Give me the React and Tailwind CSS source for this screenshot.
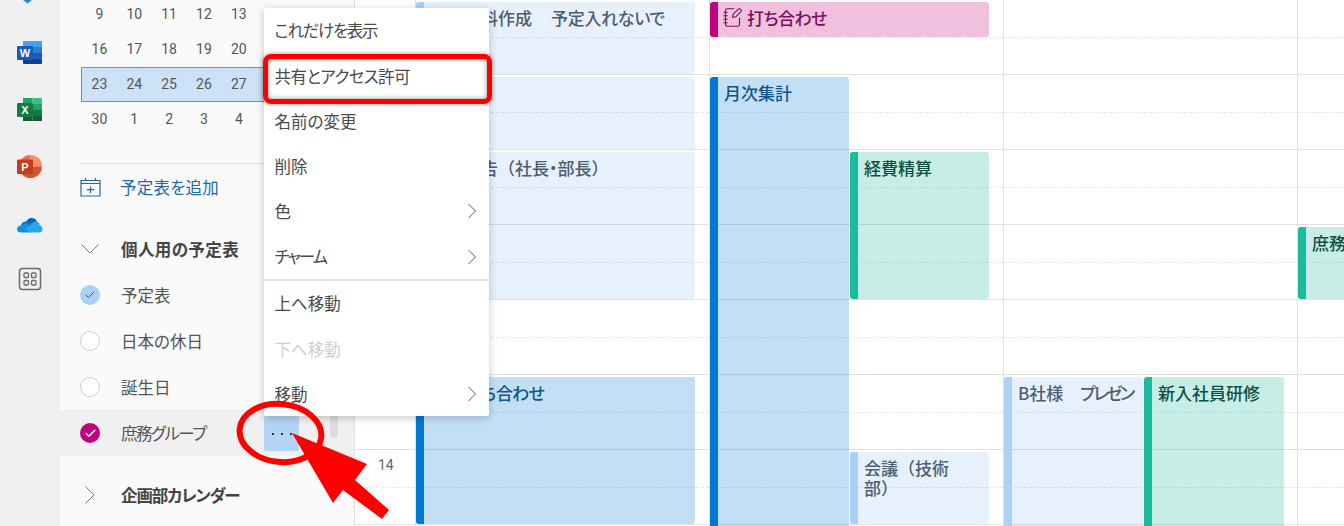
import { Check, NotebookPen } from 'lucide-react';

const hours = [0, 1, 2, 3, 4, 5, 6];

const weeks = [
  [9, 10, 11, 12, 13, '', ''],
  [16, 17, 18, 19, 20, '', ''],
  [23, 24, 25, 26, 27, '', ''],
  [30, 1, 2, 3, 4, '', ''],
];

function MenuChevron() {
  return (
    <svg width="10" height="16" viewBox="0 0 10 16" className="ml-auto mr-[12px]">
      <path d="M1.5 1 L8.5 8 L1.5 15" fill="none" stroke="#5a5a5a" strokeWidth="1" />
    </svg>
  );
}

function MenuItem({ children, arrow, disabled, className = '' }) {
  return (
    <div className={`flex h-[45.2px] items-center pl-[10.5px] ${disabled ? 'text-[#cfcfcf]' : 'text-[#4a4a4a]'} ${className}`}>
      {children}
      {arrow && <MenuChevron />}
    </div>
  );
}

function RailIcons() {
  return (
    <div className="flex h-full w-[60px] shrink-0 flex-col items-center bg-[#f0f0f0]">
      {/* tip of the icon above, cut off by the window */}
      <svg width="60" height="4" className="shrink-0">
        <path d="M23 0 H32 L27.500 3.500 Z" fill="#2b88d8" />
      </svg>
      {/* Word */}
      <svg width="26" height="24" viewBox="0 0 26 24" className="ml-[-1px] mt-[37px] shrink-0">
        <rect x="6" y="0" width="19" height="6" fill="#41a5ee" />
        <rect x="6" y="6" width="19" height="6" fill="#2b7cd3" />
        <rect x="6" y="12" width="19" height="6" fill="#185abd" />
        <rect x="6" y="18" width="19" height="5" rx="1" fill="#103f91" />
        <rect x="0" y="5" width="16" height="14" rx="1" fill="#185abd" />
        <text x="8" y="16" textAnchor="middle" fontSize="11" fontWeight="700" fill="#fff" fontFamily="'Liberation Sans', sans-serif">W</text>
      </svg>
      {/* Excel */}
      <svg width="26" height="24" viewBox="0 0 26 24" className="ml-[-1px] mt-[33px] shrink-0">
        <rect x="6" y="0" width="9.500" height="6" fill="#21a366" />
        <rect x="15.500" y="0" width="9.500" height="6" fill="#33c481" />
        <rect x="6" y="6" width="9.500" height="6" fill="#107c41" />
        <rect x="15.500" y="6" width="9.500" height="6" fill="#21a366" />
        <rect x="6" y="12" width="9.500" height="11" fill="#185c37" />
        <rect x="15.500" y="12" width="9.500" height="6" fill="#107c41" />
        <rect x="15.500" y="18" width="9.500" height="5" fill="#185c37" />
        <rect x="0" y="5" width="16" height="14" rx="1" fill="#107c41" />
        <text x="8" y="16" textAnchor="middle" fontSize="11" fontWeight="700" fill="#fff" fontFamily="'Liberation Sans', sans-serif">X</text>
      </svg>
      {/* PowerPoint */}
      <svg width="26" height="24" viewBox="0 0 26 24" className="ml-[-1px] mt-[33px] shrink-0">
        <path d="M13.500 0 A11.500 11.500 0 0 0 2 11.500 H13.500 Z" fill="#ed6c47" />
        <path d="M13.500 0 A11.500 11.500 0 0 1 25 11.500 H13.500 Z" fill="#ff8f6b" />
        <path d="M2 11.500 A11.500 11.500 0 0 0 25 11.500 Z" fill="#d35230" />
        <rect x="0" y="4.500" width="16" height="14.500" rx="1" fill="#c43e1c" />
        <text x="8" y="16" textAnchor="middle" fontSize="11" fontWeight="700" fill="#fff" fontFamily="'Liberation Sans', sans-serif">P</text>
      </svg>
      {/* OneDrive */}
      <svg width="26" height="17" viewBox="0 0 26 17" className="ml-[-1px] mt-[37px] shrink-0">
        <path d="M9 6 C10.500 1.500 17 0 20 5 L15 10 L8 7 Z" fill="#0364b8" />
        <path d="M9 5.500 C6 5.500 4 7.500 4 10 L10 13 L16 8 Z" fill="#0078d4" />
        <path d="M4.500 9 C1.500 9.500 0 11.500 0 13 C0 15.500 2 16.500 3.500 16.500 H14 L17 11 L9 7.500 Z" fill="#1490df" />
        <path d="M19.500 5.500 C16.500 5.500 14.500 7 13.500 9 L9 13 L13 16.500 H22.500 C24.500 16.500 25.500 15 25.500 13 C25.500 11 24 9.500 22.500 9 C22.500 7 21 5.500 19.500 5.500 Z" fill="#28a8ea" />
      </svg>
      {/* Apps */}
      <svg width="24" height="24" viewBox="0 0 24 24" className="mt-[34px] shrink-0" fill="none" stroke="#6a6a6a">
        <rect x="1.500" y="1.500" width="21" height="21" rx="3" strokeWidth="1.500" />
        <rect x="6" y="6" width="4.500" height="4.500" rx="1" strokeWidth="1.300" />
        <rect x="13.500" y="6" width="4.500" height="4.500" rx="1" strokeWidth="1.300" />
        <rect x="6" y="13.500" width="4.500" height="4.500" rx="1" strokeWidth="1.300" />
        <rect x="13.500" y="13.500" width="4.500" height="4.500" rx="1" strokeWidth="1.300" />
      </svg>
    </div>
  );
}

function CalendarRow({ label, circle, active, labelClass = '' }) {
  return (
    <div className={`flex h-[46px] items-center pl-[20px] ${active ? 'bg-[#f0f0f0]' : ''}`}>
      {circle === 'blue' && (
        <span className="flex h-[20px] w-[20px] items-center justify-center rounded-full bg-[#a9d2f6]">
          <Check size={12} strokeWidth={1.8} className="text-[#2f4a66]" />
        </span>
      )}
      {circle === 'empty' && <span className="h-[20px] w-[20px] rounded-full border border-[#cdcdcd] bg-white" />}
      {circle === 'pink' && (
        <span className="flex h-[20px] w-[20px] items-center justify-center rounded-full bg-[#c2047c]">
          <Check size={13} strokeWidth={2.6} className="text-white" />
        </span>
      )}
      <span className={`ml-[21px] flex-1 text-[#555] ${labelClass}`}>{label}</span>
      {active && (
        <span className="mr-[55px] mt-[1px] flex h-[35px] w-[35px] items-center justify-center gap-[7px] rounded-[2px] bg-[#b3d4f6]">
          <i className="h-[2px] w-[2px] bg-[#333]" />
          <i className="h-[2px] w-[2px] bg-[#333]" />
          <i className="h-[2px] w-[2px] bg-[#333]" />
        </span>
      )}
    </div>
  );
}

function Sidebar() {
  return (
    <div className="relative h-full w-[294px] shrink-0 bg-[#fafafa] text-[#555]">
      {/* mini month */}
      <div className="ml-[21px] mt-[-3px] w-[245px] font-['Roboto',sans-serif] text-[14px] text-[#555]">
        {weeks.map((week, i) => (
          <div
            key={i}
            className={`grid h-[35px] grid-cols-7 items-center pl-[1px] text-center ${i === 2 ? 'bg-[#cde1f7] shadow-[inset_0_0_0_1px_#7e8d9c]' : ''}`}
          >
            {week.map((d, j) => (
              <span key={j}>{d}</span>
            ))}
          </div>
        ))}
      </div>
      <div className="ml-[21px] mr-[20px] mt-[26px] border-t border-[#e1e1e1]" />
      <div className="flex h-[46px] items-center pl-[20px] text-[#1f6aa5]">
        <svg width="21" height="20" viewBox="0 0 21 20" fill="none" stroke="#1f6aa5" strokeWidth="1.200">
          <path d="M1 3.500 H20 V19 H1 Z M1 6.500 H20 M5.500 1 V3.500 M15.500 1 V3.500 M10.500 9.500 V16 M7 12.700 H14" />
        </svg>
        <span className="ml-[19px] tracking-[0.2px]">予定表を追加</span>
      </div>
      <div className="mt-[17px] flex h-[45px] items-center pl-[21px]">
        <svg width="18" height="10" viewBox="0 0 18 10" className="mt-[-1px]">
          <path d="M0.500 0.500 L9 9 L17.500 0.500" fill="none" stroke="#7a7a7a" strokeWidth="1" />
        </svg>
        <span className="ml-[22px] font-bold tracking-[0.4px] text-[#444]">個人用の予定表</span>
      </div>
      <CalendarRow label="予定表" circle="blue" />
      <CalendarRow label="日本の休日" circle="empty" />
      <CalendarRow label="誕生日" circle="empty" />
      <CalendarRow label="庶務グループ" circle="pink" active labelClass="tracking-[-1.5px]" />
      <div className="mt-[16px] flex h-[46px] items-center pl-[25px]">
        <svg width="10" height="18" viewBox="0 0 10 18">
          <path d="M0.500 0.500 L9 9 L0.500 17.500" fill="none" stroke="#7a7a7a" strokeWidth="1" />
        </svg>
        <span className="ml-[26px] font-bold tracking-[-1.100px] text-[#444]">企画部カレンダー</span>
      </div>
      {/* scrollbar thumb */}
      <div className="absolute left-[270px] top-[400px] h-[38px] w-[8px] rounded-b-[4px] bg-[#dcdcdc]" />
    </div>
  );
}

function HourLines() {
  return hours.map((h) => (
    <div key={h} className="h-[75px]">
      <div className="h-[38px] border-b border-dashed border-[#e8e8e8]" />
      <div className="h-[37px] border-b border-[#e1e1e1]" />
    </div>
  ));
}

const tone = {
  blue: 'bg-[#0078d4]/[0.24] text-[#0f548c]',
  light: 'bg-[#2583e6]/[0.11] text-[#4b5d70]',
  green: 'bg-[#1abc9c]/25 text-[#0e4f41]',
  pink: 'bg-[#c2047c]/25 text-[#7c0f56]',
};

const bar = {
  blue: 'bg-[#0078d4]',
  light: 'bg-[#a9d2f6]',
  green: 'bg-[#1abc9c]',
  pink: 'bg-[#c2047c]',
};

function Event({ kind, className, children }) {
  return (
    <div className={`absolute flex overflow-hidden rounded-[3px] ${tone[kind]} ${className}`}>
      <div className={`w-[8px] shrink-0 ${bar[kind]}`} />
      <div className="min-w-0 flex-1 pl-[6px] pr-[8px] pt-[6px] text-[17px] leading-[20px] font-medium">{children}</div>
    </div>
  );
}

function DayColumn({ children, className }) {
  return (
    <div className={`relative h-full border-l border-[#e1e1e1] ${className}`}>
      <HourLines />
      {children}
    </div>
  );
}

// full-width punctuation, outside the proportional kana setting
function Wide({ children, className = '' }) {
  return <span className={`[font-feature-settings:normal] ${className}`}>{children}</span>;
}

export default function App() {
  return (
    <div className="relative flex h-[526px] w-[1344px] overflow-hidden bg-white font-['Noto_Sans_CJK_JP','Noto_Sans',sans-serif] text-[16.5px] [font-feature-settings:'palt']">
      <RailIcons />
      <Sidebar />

      {/* time gutter */}
      <div className="relative h-full w-[61px] shrink-0 border-l border-[#e1e1e1]">
        <HourLines />
        <span className="absolute left-[23px] top-[456px] font-['Roboto',sans-serif] text-[14px] leading-[18px] text-[#666]">14</span>
      </div>

      <DayColumn className="w-[294px] shrink-0">
        <Event kind="light" className="left-0 top-[2px] h-[72px] w-[279px]">
          月次資料作成<Wide className="pl-[2px]">　</Wide><span className="tracking-[-0.3px]">予定入れないで</span>
        </Event>
        <Event kind="light" className="left-0 top-[77px] h-[72px] w-[279px]" />
        <Event kind="light" className="left-0 top-[152px] h-[147px] w-[279px]">
          月次報告<Wide>（</Wide>社長・部長<Wide>）</Wide>
        </Event>
        <Event kind="blue" className="left-0 top-[377px] h-[147px] w-[279px]">
          社内打ち<span className="tracking-[-0.8px]">合わせ</span>
        </Event>
      </DayColumn>

      <DayColumn className="w-[294px] shrink-0">
        <Event kind="pink" className="left-0 top-[2px] h-[35px] w-[279px]">
          <div className="mt-[-1px] flex items-center gap-[4px] tracking-[-0.5px]">
            <NotebookPen size={21} strokeWidth={1.3} className="ml-[-2px]" />
            打ち合わせ
          </div>
        </Event>
        <Event kind="blue" className="left-0 top-[77px] h-[460px] w-[139px]">月次集計</Event>
        <Event kind="green" className="left-[140px] top-[152px] h-[147px] w-[139px]">経費精算</Event>
        <Event kind="light" className="left-[140px] top-[452px] h-[72px] w-[139px]">
          会議<Wide>（</Wide>技術部<Wide>）</Wide>
        </Event>
      </DayColumn>

      <DayColumn className="w-[294px] shrink-0">
        <Event kind="light" className="left-0 top-[377px] h-[160px] w-[139px]">
          B社様<Wide>　</Wide><span className="tracking-[-2.5px]">プレゼン</span>
        </Event>
        <Event kind="green" className="left-[140px] top-[377px] h-[160px] w-[140px]">新入社員研修</Event>
      </DayColumn>

      <DayColumn className="min-w-0 flex-1">
        <Event kind="green" className="left-0 top-[227px] h-[72px] w-[60px]">庶務</Event>
      </DayColumn>

      {/* context menu */}
      <div className="absolute left-[264px] top-[8px] h-[408px] w-[225px] overflow-hidden rounded-[2px] bg-white shadow-[0_2px_8px_rgba(0,0,0,0.22)]">
        <MenuItem className="tracking-[-1.3px]">これだけを表示</MenuItem>
        <MenuItem className="mt-[0.8px] tracking-[-0.55px]">共有とアクセス許可</MenuItem>
        <MenuItem className="mt-[-0.4px]">名前の変更</MenuItem>
        <MenuItem className="mt-[-0.4px]">削除</MenuItem>
        <MenuItem arrow>色</MenuItem>
        <MenuItem arrow className="tracking-[-2px]">チャーム</MenuItem>
        <div className="h-[2px] bg-[#e1e1e1]" />
        <MenuItem>上へ移動</MenuItem>
        <MenuItem disabled>下へ移動</MenuItem>
        <MenuItem arrow>移動</MenuItem>
      </div>

      {/* red call-outs */}
      <div className="absolute left-[263px] top-[54px] h-[50px] w-[229px] rounded-[8px] border-[5px] border-[#ff0000] shadow-[0_0_4px_rgba(0,0,0,0.45),inset_0_0_5px_rgba(0,0,0,0.45)]" />
      <svg className="absolute left-0 top-0" width="1344" height="526">
        <ellipse cx="280.500" cy="433" rx="41" ry="29" fill="none" stroke="#ff0000" strokeWidth="6" transform="rotate(6 280.500 433)" />
        <path d="M292 433 L367 464 L355 480 L389 510 L382 519 L343 490 L333 503 Z" fill="#ff0000" />
      </svg>
    </div>
  );
}
